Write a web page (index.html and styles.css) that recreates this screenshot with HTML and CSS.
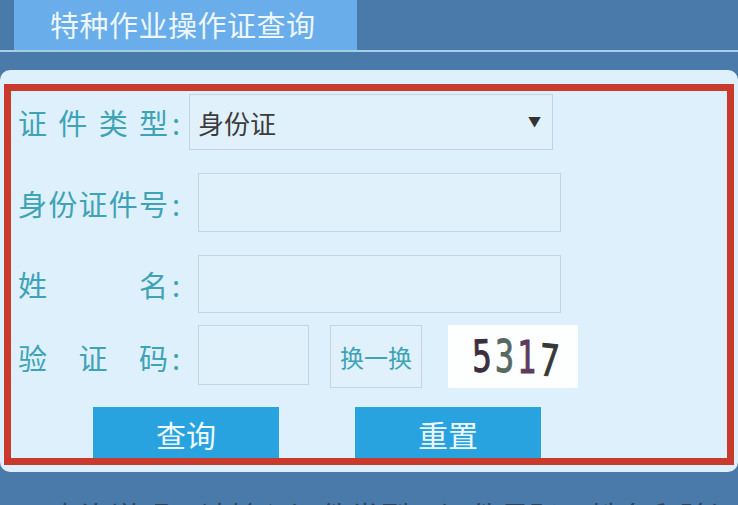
FILE: index.html
```html
<!DOCTYPE html>
<html lang="zh-CN">
<head>
    <meta charset="UTF-8">
    <meta name="viewport" content="width=device-width, initial-scale=1.0">
    <title>特种作业操作证查询</title>
    <link rel="stylesheet" href="styles.css">
</head>
<body>

<div id="page">
    <div id="header">
        <div class="tab">特种作业操作证查询</div>
    </div>

    <div id="panel">
        <form id="query-form">
            <div class="row row-type">
                <label class="label"><span class="label-text">证件类型</span>:</label>
                <div class="select-wrap">
                    <select id="id-type">
                        <option>身份证</option>
                        <option>护照</option>
                    </select>
                    <span class="arrow">&#9660;</span>
                </div>
            </div>

            <div class="row row-id">
                <label class="label" for="id-number"><span class="label-text">身份证件号</span>:</label>
                <input type="text" id="id-number" class="field">
            </div>

            <div class="row row-name">
                <label class="label" for="name"><span class="label-text">姓名</span>:</label>
                <input type="text" id="name" class="field">
            </div>

            <div class="row row-code">
                <label class="label" for="code"><span class="label-text">验证码</span>:</label>
                <input type="text" id="code" class="field field-code">
                <button type="button" class="btn-change">换一换</button>
                <div class="captcha">
                    <span class="d1">5</span><span class="d2">3</span><span class="d3">1</span><span class="d4">7</span>
                </div>
            </div>

            <div class="row row-buttons">
                <button type="submit" class="btn">查询</button>
                <button type="reset" class="btn">重置</button>
            </div>
        </form>
    </div>

    <p class="notice">查询说明：请输入证件类型、证件号码、姓名和验证码后点击查询</p>
</div>

</body>
</html>
```

FILE: styles.css
```css
body {
    margin: 0;
    padding: 0;
    background-color: #4a7aa9;
    font-family: "Noto Sans CJK SC", "Noto Sans", sans-serif;
    overflow: hidden;
}

#page {
    width: 738px;
    height: 505px;
    overflow: hidden;
}

#header {
    height: 50px;
    border-bottom: 2px solid #a6cfe6;
}

.tab {
    margin-left: 14px;
    width: 307px;
    height: 50px;
    padding-left: 36px;
    background-color: #69aeea;
    color: #eef7ff;
    font-size: 29px;
    line-height: 48px;
    letter-spacing: 0.5px;
}

#panel {
    margin-top: 18px;
    height: 388px;
    padding: 14px 4px 0 4px;
    background-color: #def0fb;
    border-radius: 10px;
}

#query-form {
    height: 367px;
    border: 7px solid #c93a2c;
    overflow: hidden;
    display: flex;
    flex-direction: column;
}

.row {
    display: flex;
    flex-shrink: 0;
    align-items: center;
    padding-left: 7px;
}

.label {
    width: 171px;
    flex-shrink: 0;
    color: #3fa3b6;
    font-size: 29px;
    display: flex;
    align-items: center;
}

.label-text {
    display: inline-block;
    width: 150px;
    text-align: justify;
    text-align-last: justify;
    margin-right: 4px;
}

.row-type {
    margin-top: 3px;
    height: 56px;
}

.row-id {
    margin-top: 23px;
    height: 59px;
}

.row-name {
    margin-top: 23px;
    height: 58px;
}

.row-code {
    margin-top: 12px;
    height: 63px;
}

.row-buttons {
    margin-top: 19px;
    padding-left: 82px;
    gap: 76px;
    align-items: flex-start;
}

.select-wrap {
    position: relative;
    width: 364px;
    height: 56px;
}

#id-type {
    -webkit-appearance: none;
    appearance: none;
    width: 100%;
    height: 100%;
    box-sizing: border-box;
    padding-left: 8px;
    border: 1px solid #c3d2dc;
    border-radius: 0;
    background-color: #e1f1fb;
    color: #3c3c3c;
    font-family: "Noto Sans CJK SC", sans-serif;
    font-size: 26px;
}

.arrow {
    position: absolute;
    right: 12px;
    top: 17px;
    font-size: 13px;
    color: #333;
    pointer-events: none;
}

.field {
    box-sizing: border-box;
    margin-left: 9px;
    width: 363px;
    height: 100%;
    border: 1px solid #c6d4de;
    background-color: #e1f1fb;
    font-size: 22px;
}

.field-code {
    width: 111px;
    height: 60px;
    align-self: flex-start;
}

.btn-change {
    box-sizing: border-box;
    margin-left: 21px;
    width: 92px;
    height: 63px;
    padding: 0;
    border: 1px solid #c6d4de;
    background-color: #e1f1fb;
    color: #3fa3b6;
    font-family: "Noto Sans CJK SC", sans-serif;
    font-size: 24px;
}

.captcha {
    margin-left: 26px;
    width: 130px;
    height: 63px;
    background-color: #fdfefe;
    display: flex;
    align-items: center;
    padding-left: 24px;
    box-sizing: border-box;
    font-family: "DejaVu Sans Mono", monospace;
    font-size: 44px;
}

.captcha span {
    display: inline-block;
    margin-right: -4px;
    transform-origin: left center;
    -webkit-text-stroke: 1px currentColor;
}

.d1 {
    color: #3b2f3e;
    transform: scaleX(0.74) rotate(-2deg);
}

.d2 {
    color: #566a62;
    transform: scaleX(0.72);
}

.d3 {
    color: #5c3b60;
    transform: scaleX(0.72) translateY(1px);
}

.d4 {
    color: #353938;
    transform: scaleX(0.74) rotate(4deg) translateY(3px);
}

.btn {
    width: 186px;
    height: 60px;
    padding: 0 0 6px 0;
    border: none;
    background-color: #28a3e0;
    color: #eef8ff;
    font-family: "Noto Sans CJK SC", sans-serif;
    font-size: 30px;
    line-height: 50px;
    text-align: center;
}

.notice {
    margin: 21px 0 0 50px;
    color: #2a4563;
    font-size: 30px;
    white-space: nowrap;
}
```
